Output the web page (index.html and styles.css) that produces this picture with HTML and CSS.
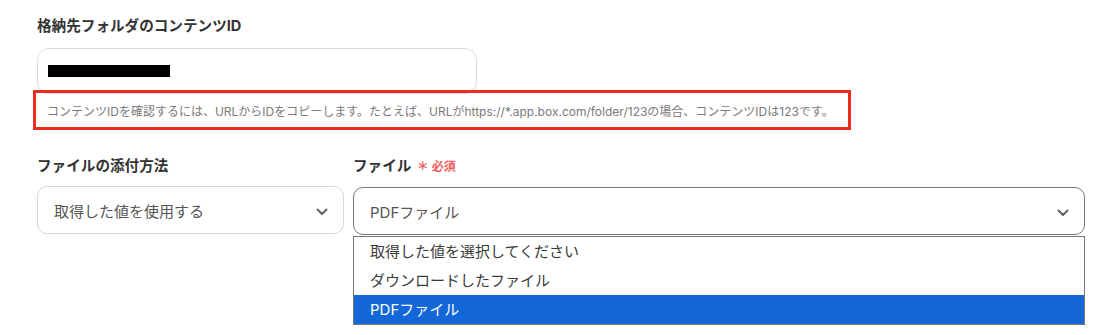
FILE: index.html
```html
<!DOCTYPE html>
<html lang="ja">
  <head>
    <meta charset="UTF-8" />
    <meta name="viewport" content="width=device-width, initial-scale=1.0" />
    <title>Box ファイルアップロード設定</title>
    <link rel="stylesheet" href="styles.css">
  </head>
  <body>
    <div class="form">
      <div class="field-title">格納先フォルダのコンテンツID</div>
      <div class="text-input">
        <span class="redact"></span>
      </div>
      <div class="hint-box">
        コンテンツIDを確認するには、URLからIDをコピーします。たとえば、URLがhttps://*.app.box.com/folder/123の場合、コンテンツIDは123です。
      </div>

      <div class="row">
        <div class="col">
          <div class="field-title">ファイルの添付方法</div>
          <div class="select">
            <span>取得した値を使用する</span>
            <svg class="chevron" width="12" height="8" viewBox="0 0 12 8">
              <path d="M1.5 1.5 L6 6 L10.5 1.5" fill="none" stroke="#5f6368" stroke-width="2" stroke-linecap="round" stroke-linejoin="round" />
            </svg>
          </div>
        </div>
        <div class="col">
          <div class="field-title">
            ファイル <span class="required">＊ 必須</span>
          </div>
          <div class="select open">
            <span>PDFファイル</span>
            <svg class="chevron" width="12" height="8" viewBox="0 0 12 8">
              <path d="M1.5 1.5 L6 6 L10.5 1.5" fill="none" stroke="#5f6368" stroke-width="2" stroke-linecap="round" stroke-linejoin="round" />
            </svg>
          </div>
          <ul class="options">
            <li>取得した値を選択してください</li>
            <li>ダウンロードしたファイル</li>
            <li class="selected">PDFファイル</li>
          </ul>
        </div>
      </div>
    </div>
  </body>
</html>
```

FILE: styles.css
```css
body {
  margin: 0;
  background-color: #fff;
  font-family: "Inter", "Noto Sans CJK JP", sans-serif;
  color: #333;
}

.form {
  padding: 16px 25px 0 37px;
}

.field-title {
  font-size: 14.6px;
  font-weight: 700;
  line-height: 20px;
  color: #333;
  margin-bottom: 12px;
}

.text-input {
  width: 440px;
  height: 46px;
  box-sizing: border-box;
  border: 1px solid #d6dae2;
  border-radius: 12px;
  padding-left: 10px;
  display: flex;
  align-items: center;
}

.redact {
  width: 122px;
  height: 12px;
  background-color: #000;
}

.hint-box {
  width: 818px;
  height: 40px;
  box-sizing: border-box;
  margin: -4px 0 0 -4px;
  border: 3px solid #ec2b1e;
  padding-left: 11px;
  display: flex;
  align-items: center;
  font-size: 12px;
  color: #7a7a7a;
  white-space: nowrap;
}

.row {
  display: grid;
  grid-template-columns: 307px 732px;
  column-gap: 9px;
  margin-top: 26px;
}

.row .field-title {
  margin-bottom: 10px;
}

.required {
  font-size: 12px;
  color: #f15b5b;
  margin-left: 2px;
}

.select {
  height: 48px;
  box-sizing: border-box;
  border: 1px solid #d3d7df;
  border-radius: 10px;
  padding: 0 15px 0 16px;
  display: flex;
  align-items: center;
  justify-content: space-between;
  font-size: 15px;
  color: #555;
}

.select.open {
  border-color: #777;
}

.chevron {
  margin-top: 3px;
}

.options {
  list-style: none;
  margin: 1px 0 0;
  padding: 0;
  border: 1px solid #777;
}

.options li {
  height: 29px;
  line-height: 29px;
  padding-left: 16px;
  font-size: 15px;
  color: #3a3a3a;
}

.options li.selected {
  background-color: #1367d8;
  color: #fff;
}
```
